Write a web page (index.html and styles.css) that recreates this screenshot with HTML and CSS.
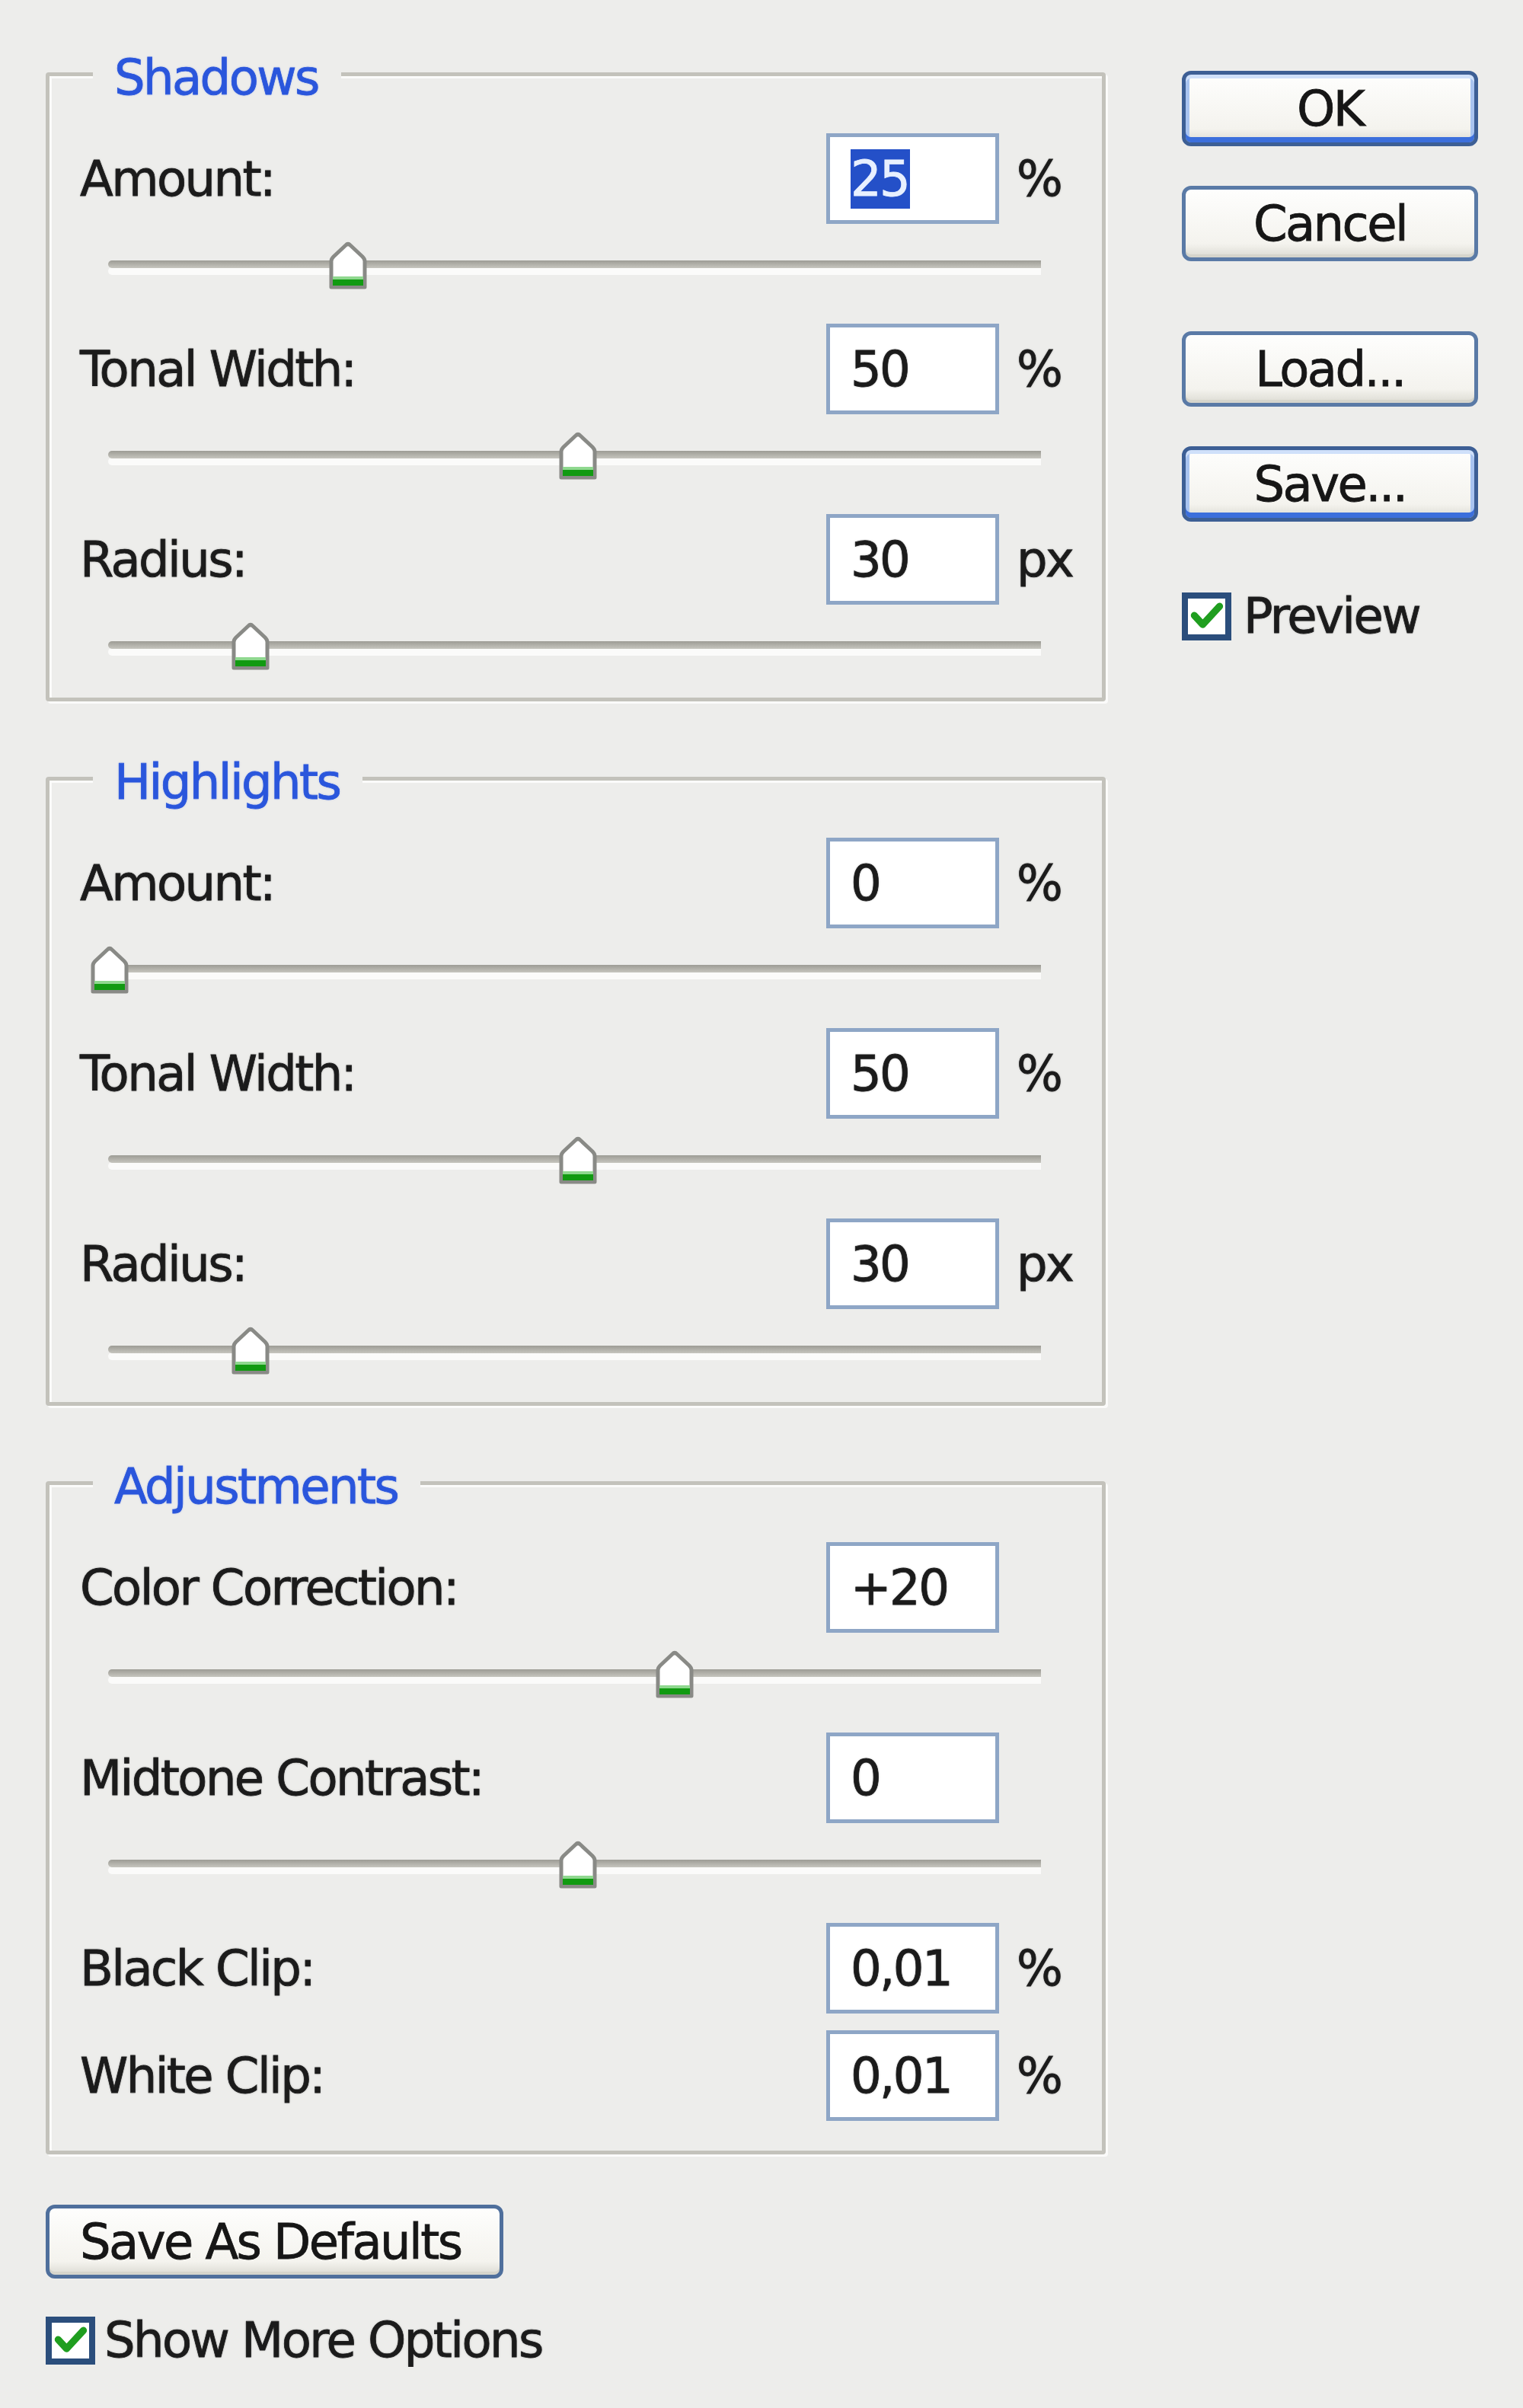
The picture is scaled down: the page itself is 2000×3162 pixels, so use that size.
FILE: index.html
```html
<!DOCTYPE html>
<html lang="en">
<head>
	<meta charset="UTF-8">
	<title>Shadow/Highlight</title>
	<link rel="stylesheet" href="styles.css">
</head>
<body>
	<div class="dialog">
		<div class="groups">
			<fieldset class="group">
				<legend>Shadows</legend>
				<div class="param">
					<div class="row">
						<span class="label">Amount:</span>
						<span class="field"><span class="sel">25</span></span>
						<span class="unit">%</span>
					</div>
					<div class="slider"><div class="track"></div><span class="thumb" style="left: 25.7%"></span></div>
				</div>
				<div class="param">
					<div class="row">
						<span class="label">Tonal Width:</span>
						<span class="field">50</span>
						<span class="unit">%</span>
					</div>
					<div class="slider"><div class="track"></div><span class="thumb" style="left: 50.4%"></span></div>
				</div>
				<div class="param">
					<div class="row">
						<span class="label">Radius:</span>
						<span class="field">30</span>
						<span class="unit">px</span>
					</div>
					<div class="slider"><div class="track"></div><span class="thumb" style="left: 15.3%"></span></div>
				</div>
			</fieldset>

			<fieldset class="group">
				<legend>Highlights</legend>
				<div class="param">
					<div class="row">
						<span class="label">Amount:</span>
						<span class="field">0</span>
						<span class="unit">%</span>
					</div>
					<div class="slider"><div class="track"></div><span class="thumb" style="left: 0.2%"></span></div>
				</div>
				<div class="param">
					<div class="row">
						<span class="label">Tonal Width:</span>
						<span class="field">50</span>
						<span class="unit">%</span>
					</div>
					<div class="slider"><div class="track"></div><span class="thumb" style="left: 50.4%"></span></div>
				</div>
				<div class="param">
					<div class="row">
						<span class="label">Radius:</span>
						<span class="field">30</span>
						<span class="unit">px</span>
					</div>
					<div class="slider"><div class="track"></div><span class="thumb" style="left: 15.3%"></span></div>
				</div>
			</fieldset>

			<fieldset class="group">
				<legend>Adjustments</legend>
				<div class="param">
					<div class="row">
						<span class="label">Color Correction:</span>
						<span class="field">+20</span>
						<span class="unit"></span>
					</div>
					<div class="slider"><div class="track"></div><span class="thumb" style="left: 60.7%"></span></div>
				</div>
				<div class="param">
					<div class="row">
						<span class="label">Midtone Contrast:</span>
						<span class="field">0</span>
						<span class="unit"></span>
					</div>
					<div class="slider"><div class="track"></div><span class="thumb" style="left: 50.4%"></span></div>
				</div>
				<div class="row clip">
					<span class="label">Black Clip:</span>
					<span class="field">0,01</span>
					<span class="unit">%</span>
				</div>
				<div class="row clip">
					<span class="label">White Clip:</span>
					<span class="field">0,01</span>
					<span class="unit">%</span>
				</div>
			</fieldset>

			<button class="btn defaults">Save As Defaults</button>
			<label class="checkbox">
				<span class="check"><svg viewBox="0 0 53 51"><path d="M9 24 L21 37 L45 11" /></svg></span>
				Show More Options
			</label>
		</div>

		<div class="actions">
			<button class="btn primary">OK</button>
			<button class="btn">Cancel</button>
			<button class="btn load">Load...</button>
			<button class="btn primary">Save...</button>
			<label class="checkbox preview">
				<span class="check"><svg viewBox="0 0 53 51"><path d="M9 24 L21 37 L45 11" /></svg></span>
				Preview
			</label>
		</div>
	</div>
</body>
</html>
```

FILE: styles.css
```css
body{
	margin: 0;
	background: #ededeb;
	font-family: "DejaVu Sans", Verdana, sans-serif;
	font-size: 64px;
	letter-spacing: -2.6px;
	color: #1b1b1b;
	-webkit-text-stroke: 0.8px currentColor;
	text-shadow: 0 0 3px rgba(0,0,0,.3);
}

.dialog{
	display: flex;
	padding-left: 60px;
}

.groups{
	width: 1392px;
	padding-top: 62px;
}

/* group boxes */
.group{
	margin: 0 0 66px;
	padding: 43px 0 22px 40px;
	border: 5px solid #c3c2bb;
	border-radius: 4px;
	box-shadow: inset 3px 3px 0 #fbfbfa, 3px 3px 0 #fbfbfa;
	min-width: 0;
}

.group legend{
	position: relative;
	top: 5px;
	margin-left: 17px;
	padding: 0 30px 0 28px;
	line-height: 70px;
	background: #ededeb;
	color: #2a56dc;
	text-shadow: 0 0 3px rgba(40,80,220,.3);
}

.param{
	margin-bottom: 31px;
}
.param:last-child{
	margin-bottom: 0;
}

.row{
	display: flex;
	align-items: center;
	height: 119px;
}

.label{
	flex: 1;
	line-height: 70px;
}

.field{
	display: flex;
	align-items: center;
	box-sizing: border-box;
	width: 227px;
	height: 119px;
	padding-left: 27px;
	border: 5px solid #8ea6c6;
	background: #fff;
}

.field .sel{
	background: #2450c8;
	color: #e8f0ff;
	-webkit-text-stroke: 0.8px #e8f0ff;
	text-shadow: none;
	line-height: 78px;
	padding-right: 2px;
}

.unit{
	width: 112px;
	margin-left: 23px;
}

.param + .clip{
	margin-top: 4px;
}
.clip + .clip{
	margin-top: 22px;
}
.clip:last-child{
	margin-bottom: 17px;
}

/* sliders */
.slider{
	position: relative;
	height: 100px;
	margin-left: 37px;
	width: 1225px;
}

.slider .track{
	position: relative;
	top: 48px;
	height: 10px;
	border-radius: 5px 0 0 5px;
	background: linear-gradient(#9d9c95, #c6c5be);
	box-shadow: 0 9px 0 #fbfbfa;
}

.slider .thumb{
	position: absolute;
	top: 22px;
	width: 54px;
	height: 66px;
	transform: translateX(-50%);
	background: url("data:image/svg+xml;utf8,<svg xmlns='http://www.w3.org/2000/svg' viewBox='0 0 54 66'><path d='M5 61 V27 Q5 24 8 21 L24 6 Q27 3 30 6 L46 21 Q49 24 49 27 V61 Z' fill='white' stroke='%23898a86' stroke-width='5' stroke-linejoin='round'/><rect x='7' y='50' width='40' height='9' fill='%23119a11'/><rect x='7' y='47' width='40' height='4' fill='%238fd88f'/></svg>") no-repeat 0 0 / 100% 100%;
}

/* buttons */
.btn{
	display: block;
	box-sizing: border-box;
	width: 389px;
	height: 99px;
	padding: 0;
	border: 5px solid #5a7aa6;
	border-radius: 12px;
	background: linear-gradient(#fefefd, #f4f3ee 80%, #dcdbd3);
	box-shadow: inset 0 -4px 0 #d6d5cc;
	font: inherit;
	letter-spacing: inherit;
	color: #161616;
	text-align: center;
	line-height: 86px;
}

.btn.primary{
	border-color: #3d5f95;
	box-shadow: inset 0 5px 0 #cfe0fa, inset 0 -7px 0 #3c6fdc, inset 5px 0 0 #a9c4f0, inset -5px 0 0 #a9c4f0;
}

.actions{
	width: 389px;
	margin-left: 100px;
	padding-top: 93px;
}

.actions .btn + .btn{
	margin-top: 52px;
}
.actions .btn.load{
	margin-top: 92px;
}

.defaults{
	width: 601px;
	height: 97px;
	margin-top: 10px;
	text-align: left;
	padding-left: 40px;
	border-color: #4f6f9c;
}

/* checkboxes */
.checkbox{
	display: flex;
	align-items: center;
	gap: 12px;
	margin-top: 46px;
	line-height: 70px;
}

.check{
	display: block;
	box-sizing: border-box;
	width: 65px;
	height: 63px;
	border: 8px solid #2b4e7c;
	background: #fff;
}

.check svg{
	display: block;
	width: 100%;
	height: 100%;
}

.check svg path{
	fill: none;
	stroke: #1f9e1f;
	stroke-width: 10;
	stroke-linecap: round;
	stroke-linejoin: round;
}

.preview{
	margin-top: 89px;
	gap: 16px;
}
```
